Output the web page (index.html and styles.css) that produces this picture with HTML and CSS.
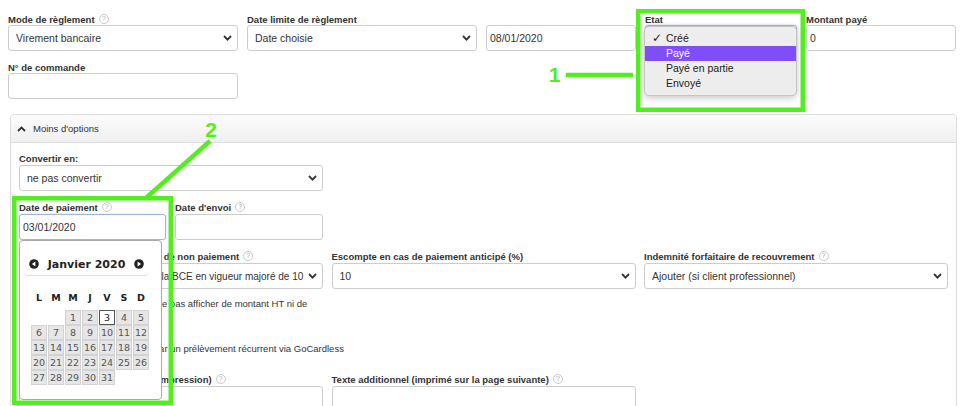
FILE: index.html
```html
<!DOCTYPE html>
<html lang="fr">
<head>
    <meta charset="UTF-8">
    <title>Règlement</title>
    <link rel="stylesheet" href="styles.css">
</head>
<body>
<div class="page">
    <div class="top-grid">
        <div class="field">
            <label class="lbl">Mode de règlement<span class="help">?</span></label>
            <div class="ctl select"><span class="val">Virement bancaire</span><svg class="chev" width="9" height="6" viewBox="0 0 9 6"><polyline points="1,1 4.5,4.6 8,1"/></svg></div>
        </div>
        <div class="field">
            <label class="lbl">Date limite de règlement</label>
            <div class="ctl select"><span class="val">Date choisie</span><svg class="chev" width="9" height="6" viewBox="0 0 9 6"><polyline points="1,1 4.5,4.6 8,1"/></svg></div>
        </div>
        <div class="field no-label">
            <input class="ctl" type="text" value="08/01/2020">
        </div>
        <div class="field etat">
            <label class="lbl">Etat</label>
            <div class="ctl select focus"><span class="val">Créé</span><svg class="chev" width="9" height="6" viewBox="0 0 9 6"><polyline points="1,1 4.5,4.6 8,1"/></svg></div>
            <ul class="menu">
                <li><span class="tick">✓</span>Créé</li>
                <li class="hl"><span class="tick"></span>Payé</li>
                <li><span class="tick"></span>Payé en partie</li>
                <li><span class="tick"></span>Envoyé</li>
            </ul>
        </div>
        <div class="field">
            <label class="lbl">Montant payé</label>
            <input class="ctl" type="text" value="0">
        </div>
        <div class="field">
            <label class="lbl">N° de commande</label>
            <input class="ctl" type="text" value="">
        </div>
    </div>

    <div class="panel">
        <div class="panel-head">
            <svg class="up" width="9" height="6" viewBox="0 0 9 6"><polyline points="1,5 4.5,1.5 8,5"/></svg>
            Moins d'options
        </div>
        <div class="panel-body">
            <div class="col1">
                <div class="field">
                    <label class="lbl">Convertir en:</label>
                    <div class="ctl select"><span class="val">ne pas convertir</span><svg class="chev" width="9" height="6" viewBox="0 0 9 6"><polyline points="1,1 4.5,4.6 8,1"/></svg></div>
                </div>
                <div class="dates">
                    <div class="field date-pay">
                        <label class="lbl">Date de paiement<span class="help">?</span></label>
                        <input class="ctl focus" type="text" value="03/01/2020">
                        <div class="calendar">
                            <div class="cal-head">
                                <svg width="10" height="10" viewBox="0 0 10 10"><circle cx="5" cy="5" r="4.8" fill="#222"/><polygon points="6.4,2.5 2.9,5 6.4,7.5" fill="#fff"/></svg>
                                <span>Janvier 2020</span>
                                <svg width="10" height="10" viewBox="0 0 10 10"><circle cx="5" cy="5" r="4.8" fill="#222"/><polygon points="3.6,2.5 7.1,5 3.6,7.5" fill="#fff"/></svg>
                            </div>
                            <div class="cal-days">
                                <span>L</span><span>M</span><span>M</span><span>J</span><span>V</span><span>S</span><span>D</span>
                            </div>
                            <div class="cal-grid">
                                <span class="day first">1</span><span class="day">2</span><span class="day today">3</span><span class="day">4</span><span class="day">5</span>
                                <span class="day">6</span><span class="day">7</span><span class="day">8</span><span class="day">9</span><span class="day">10</span><span class="day">11</span><span class="day">12</span>
                                <span class="day">13</span><span class="day">14</span><span class="day">15</span><span class="day">16</span><span class="day">17</span><span class="day">18</span><span class="day">19</span>
                                <span class="day">20</span><span class="day">21</span><span class="day">22</span><span class="day">23</span><span class="day">24</span><span class="day">25</span><span class="day">26</span>
                                <span class="day">27</span><span class="day">28</span><span class="day">29</span><span class="day">30</span><span class="day">31</span>
                            </div>
                        </div>
                    </div>
                    <div class="field">
                        <label class="lbl">Date d'envoi<span class="help">?</span></label>
                        <input class="ctl" type="text" value="">
                    </div>
                </div>
            </div>

            <div class="grid3">
                <div class="field">
                    <label class="lbl">Taux d'intérêts de retard en cas de non paiement<span class="help">?</span></label>
                    <div class="ctl select small"><span class="val">Les taux de refinancement de la BCE en vigueur majoré de 10 points</span><svg class="chev" width="9" height="6" viewBox="0 0 9 6"><polyline points="1,1 4.5,4.6 8,1"/></svg></div>
                </div>
                <div class="field">
                    <label class="lbl">Escompte en cas de paiement anticipé (%)</label>
                    <div class="ctl select"><span class="val">10</span><svg class="chev" width="9" height="6" viewBox="0 0 9 6"><polyline points="1,1 4.5,4.6 8,1"/></svg></div>
                </div>
                <div class="field">
                    <label class="lbl">Indemnité forfaitaire de recouvrement<span class="help">?</span></label>
                    <div class="ctl select"><span class="val">Ajouter (si client professionnel)</span><svg class="chev" width="9" height="6" viewBox="0 0 9 6"><polyline points="1,1 4.5,4.6 8,1"/></svg></div>
                </div>
            </div>

            <label class="check-row first"><input type="checkbox"><span>Franchise en base de TVA – ne pas afficher de montant HT ni de TVA</span></label>
            <label class="check-row second"><input type="checkbox"><span>Proposer au client de payer par un prélèvement récurrent via GoCardless</span></label>

            <div class="grid3 notes">
                <div class="field">
                    <label class="lbl">Texte additionnel (affiché sur l'impression)<span class="help">?</span></label>
                    <textarea class="ctl area"></textarea>
                </div>
                <div class="field">
                    <label class="lbl">Texte additionnel (imprimé sur la page suivante)<span class="help">?</span></label>
                    <textarea class="ctl area"></textarea>
                </div>
            </div>
        </div>
    </div>

    <!-- annotations drawn over the screenshot -->
    <svg class="marks" width="962" height="406" viewBox="0 0 962 406">
        <rect x="638.25" y="11.25" width="164.5" height="98.5"/>
        <line x1="566" y1="75" x2="633" y2="75"/>
        <text x="554.5" y="81.5">1</text>
        <rect x="14.25" y="198.25" width="156.5" height="204.5"/>
        <line x1="210" y1="141" x2="146" y2="198"/>
        <text x="211" y="136.5">2</text>
    </svg>
</div>
</body>
</html>
```

FILE: styles.css
```css
body {
    margin: 0;
    font-family: "Liberation Sans", Arial, sans-serif;
    color: #333;
    background-color: #fff;
    overflow: hidden;
}
.page {
    position: relative;
    width: 962px;
    height: 406px;
    overflow: hidden;
    padding: 13px 0 0 8px;
    box-sizing: border-box;
}
.top-grid {
    display: grid;
    grid-template-columns: 230px 230px 150px 152px 150px;
    column-gap: 9px;
    row-gap: 10px;
}
.field {
    position: relative;
    min-width: 0;
}
.no-label {
    padding-top: 12px;
}
.lbl {
    display: flex;
    align-items: center;
    height: 12px;
    font-size: 9.5px;
    font-weight: bold;
    color: #333;
    white-space: nowrap;
}
.help {
    display: inline-block;
    width: 10px;
    height: 10px;
    box-sizing: border-box;
    margin-left: 4px;
    border: 1px solid #c8c8c8;
    border-radius: 50%;
    font-size: 7px;
    font-weight: normal;
    line-height: 8px;
    text-align: center;
    color: #aaa;
}
.ctl {
    display: block;
    width: 100%;
    height: 26px;
    box-sizing: border-box;
    border: 1px solid #ccc;
    border-radius: 3px;
    background-color: #fff;
    font-family: inherit;
    font-size: 10.5px;
    color: #333;
    margin: 0;
}
input.ctl {
    padding: 0 3px;
    outline: none;
}
.ctl.focus {
    border-color: #9db5e6;
    box-shadow: 0 0 2px rgba(90, 130, 215, 0.35);
}
.select {
    display: flex;
    align-items: center;
    padding: 0 5px 0 7px;
}
.select.small {
    font-size: 10px;
}
.select .val {
    flex: 1;
    min-width: 0;
    overflow: hidden;
    white-space: nowrap;
}
.chev {
    flex: none;
    margin-left: 4px;
}
.chev polyline, .up polyline {
    fill: none;
    stroke: #333;
    stroke-width: 1.8;
}

/* Etat native menu */
.menu {
    position: absolute;
    left: -1px;
    top: 13px;
    width: 153px;
    height: 70px;
    box-sizing: border-box;
    margin: 0;
    padding: 4px 0;
    list-style: none;
    background-color: #ededed;
    border: 1px solid #c4c4c4;
    border-radius: 5px;
    box-shadow: 0 2px 7px rgba(0, 0, 0, 0.22);
    z-index: 3;
}
.menu li {
    display: flex;
    height: 15px;
    line-height: 15px;
    padding-left: 7px;
    font-size: 10.5px;
    color: #222;
}
.menu li.hl {
    background-color: #7f4ef6;
    color: #fff;
}
.tick {
    width: 14px;
    font-family: "DejaVu Sans", sans-serif;
    font-size: 12px;
}

/* options panel */
.panel {
    margin: 15px 5px 0 2px;
    border: 1px solid #ddd;
    border-radius: 4px;
}
.panel-head {
    display: flex;
    align-items: center;
    gap: 7px;
    height: 27px;
    padding-left: 6px;
    border-bottom: 1px solid #ddd;
    border-radius: 4px 4px 0 0;
    background: linear-gradient(#fbfbfb, #f0f0f0);
    font-size: 9.5px;
}
.panel-body {
    padding: 9px 8px 0 8px;
}
.panel-body .lbl {
    margin-bottom: 1px;
}
.col1 {
    width: 304px;
}
.dates {
    display: grid;
    grid-template-columns: 147px 148px;
    column-gap: 9px;
    margin-top: 10px;
}
.grid3 {
    display: grid;
    grid-template-columns: repeat(3, minmax(0, 1fr));
    column-gap: 8.5px;
    margin-top: 10px;
}
.check-row {
    display: flex;
    align-items: flex-start;
    font-size: 9.5px;
    line-height: 12px;
}
.check-row input {
    width: 13px;
    height: 13px;
    margin: 0 3px 0 0;
}
.check-row.first {
    width: 304px;
    margin-top: 9px;
}
.check-row.second {
    margin-top: 21px;
}
.grid3.notes {
    margin-top: 17px;
}
.area {
    height: 60px;
    resize: none;
}

/* datepicker */
.calendar {
    position: absolute;
    left: 0;
    top: 39px;
    width: 143px;
    height: 160px;
    box-sizing: border-box;
    padding: 12px 12px 0 4px;
    border: 1px solid #aaa;
    border-radius: 4px;
    background-color: #fff;
    font-family: "DejaVu Sans", Verdana, sans-serif;
    z-index: 3;
}
.cal-head {
    display: flex;
    align-items: center;
    justify-content: space-between;
    height: 22px;
    padding: 0 5px;
    border-bottom: 1px solid #ddd;
    border-radius: 0 0 4px 4px;
    font-size: 11px;
    font-weight: bold;
    color: #222;
}
.cal-days, .cal-grid {
    display: grid;
    grid-template-columns: repeat(7, 16px);
    column-gap: 1px;
    margin-left: 7px;
}
.cal-days {
    margin-top: 15px;
    height: 14px;
    line-height: 14px;
    font-size: 9.5px;
    font-weight: bold;
    text-align: center;
    color: #222;
}
.cal-grid {
    margin-top: 5px;
    grid-auto-rows: 15px;
}
.day {
    box-sizing: border-box;
    border: 1px solid #d3d3d3;
    background-color: #e6e6e6;
    color: #555;
    font-size: 9.5px;
    line-height: 13px;
    text-align: center;
}
.day.first {
    grid-column-start: 3;
}
.day.today {
    background-color: #fff;
    border-color: #555;
    color: #222;
}

/* green annotations */
.marks {
    position: absolute;
    left: 0;
    top: 0;
    z-index: 5;
    pointer-events: none;
}
.marks rect, .marks line {
    fill: none;
    stroke: #52ef1e;
    stroke-width: 4.5;
}
.marks text {
    fill: #52ef1e;
    font-family: "Liberation Sans", Arial, sans-serif;
    font-size: 21px;
    font-weight: bold;
    text-anchor: middle;
}
```
